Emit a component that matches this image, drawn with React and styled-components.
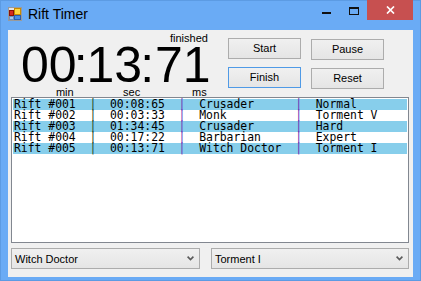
import React from "react";
import styled, { createGlobalStyle } from "styled-components";

const GlobalStyle = createGlobalStyle`
  html, body { margin: 0; padding: 0; }
  body {
    width: 421px; height: 281px; overflow: hidden;
    font-family: "Liberation Sans", Arial, sans-serif;
  }
`;

const Window = styled.div`
  width: 421px; height: 281px; box-sizing: border-box;
  background: #6aabf5;
  box-shadow: inset 0 0 0 1px #5c9be3;
  display: flex; flex-direction: column;
`;

const TitleBar = styled.div`
  height: 30px; flex-shrink: 0;
  display: flex; align-items: flex-start;
`;

const AppIcon = styled.svg`
  margin: 7px 0 0 8px; flex-shrink: 0;
`;

const Title = styled.div`
  margin: 6px 0 0 6px;
  font-size: 14px; line-height: 17px; color: #000;
`;

const Caption = styled.div`
  margin-left: auto; margin-right: 8px;
  display: flex;
`;

const CaptionButton = styled.div`
  width: ${(p) => p.$w}px; height: 20px; box-sizing: border-box;
  padding-top: ${(p) => p.$top}px;
  display: flex; justify-content: center; align-items: flex-start;
  background: ${(p) => p.$bg || "transparent"};
`;

const MinGlyph = styled.div`
  width: 9px; height: 2px; background: #111;
`;

const MaxGlyph = styled.div`
  width: 10px; height: 8px; box-sizing: border-box;
  border: 1px solid #111; border-top-width: 2px;
`;

const Client = styled.div`
  margin: 0 8px 4px 8px; flex: 1;
  background: #f0f0f0;
  display: flex; flex-direction: column;
`;

const TopSection = styled.div`
  height: 67px; flex-shrink: 0;
  display: flex;
`;

const TimeBlock = styled.div`
  width: 207px; margin-left: 13px; padding-top: 3px; box-sizing: border-box;
  display: flex; flex-direction: column;
`;

const Finished = styled.div`
  margin-left: 149px; height: 10px; margin-bottom: 1px;
  font-size: 11px; line-height: 10px; color: #000;
`;

const TimeRow = styled.div`
  display: flex; align-items: flex-start;
`;

const TimeGroup = styled.div`
  display: flex; flex-direction: column; align-items: flex-end;
`;

const Digits = styled.div`
  font-size: 50px; line-height: 43px; height: 43px; color: #000;
`;

const Colon = styled(Digits)`
  margin: ${(p) => p.$m};
`;

const Unit = styled.div`
  font-size: 11px; line-height: 10px; height: 10px;
  margin-right: ${(p) => p.$shift}px;
  color: #000;
`;

const ButtonGrid = styled.div`
  margin-top: 8px;
  display: grid;
  grid-template-columns: 73px 73px;
  grid-auto-rows: 21px;
  column-gap: 10px; row-gap: 8px;
  align-self: flex-start;
`;

const Button = styled.button`
  box-sizing: border-box; height: 21px; padding: 0;
  margin-top: ${(p) => (p.$drop ? 1 : 0)}px;
  border: 1px solid ${(p) => (p.$focused ? "#4f9ae6" : "#acacac")};
  background: linear-gradient(#f0f0f0, #e5e5e5);
  font-family: "Liberation Sans", Arial, sans-serif;
  font-size: 11px; line-height: 19px; color: #000;
`;

const List = styled.div`
  margin: 0 4px 0 3px; height: 146px; flex-shrink: 0;
  box-sizing: border-box;
  border: 1px solid #828790;
  background: #fff;
  padding: 1px;
`;

const Row = styled.div`
  height: 11px; line-height: 11px;
  padding-left: 1px;
  background: ${(p) => (p.$alt ? "#87ceeb" : "transparent")};
  font-family: "DejaVu Sans Mono", "Liberation Mono", monospace;
  font-size: 11.4px;
  white-space: pre; color: #000;
`;

const Pipe = styled.span`
  color: ${(p) => p.$c};
`;

const ComboRow = styled.div`
  display: flex; gap: 11px;
  margin: 5px 4px 0 3px;
`;

const Combo = styled.div`
  box-sizing: border-box;
  width: ${(p) => p.$w}px; height: 21px;
  border: 1px solid #acacac;
  background: linear-gradient(#f0f0f0, #e5e5e5);
  display: flex; align-items: center;
  padding: 0 5px 0 3px;
  font-size: 11px; color: #000;
`;

const Chevron = styled.svg`
  margin-left: auto; flex-shrink: 0;
`;

const rows = [
  ["Rift #001", "00:08:65", "Crusader", "Normal"],
  ["Rift #002", "00:03:33", "Monk", "Torment V"],
  ["Rift #003", "01:34:45", "Crusader", "Hard"],
  ["Rift #004", "00:17:22", "Barbarian", "Expert"],
  ["Rift #005", "00:13:71", "Witch Doctor", "Torment I"],
];

const ChevronIcon = () => (
  <Chevron width="7" height="5" viewBox="0 0 7 5">
    <path d="M0.6 0.6 L3.5 3.6 L6.4 0.6" fill="none" stroke="#5a5a5a" strokeWidth="1.6" />
  </Chevron>
);

export default function App() {
  return (
    <>
      <GlobalStyle />
      <Window>
        <TitleBar>
          <AppIcon width="14" height="14" viewBox="0 0 14 14">
            <rect x="0.5" y="0.5" width="13" height="13" fill="#e4e4e4" stroke="#9a9a9a" />
            <rect x="1.5" y="3.5" width="4" height="5" fill="#d42a1e" stroke="#8a1208" />
            <rect x="6.5" y="1.5" width="6" height="6" fill="#ffd640" stroke="#c98a00" />
            <rect x="6.5" y="8.5" width="6" height="4" fill="#4a8de4" stroke="#2a5fae" />
            <rect x="1.5" y="9.5" width="4" height="3" fill="#a9c6ec" stroke="#6f8fbd" />
          </AppIcon>
          <Title>Rift Timer</Title>
          <Caption>
            <CaptionButton $w={27} $top={12}>
              <MinGlyph />
            </CaptionButton>
            <CaptionButton $w={27} $top={7}>
              <MaxGlyph />
            </CaptionButton>
            <CaptionButton $w={46} $top={6} $bg="#c75050">
              <svg width="9" height="8" viewBox="0 0 9 8">
                <path d="M1 0.5 L8 7.5 M8 0.5 L1 7.5" stroke="#fff" strokeWidth="1.7" />
              </svg>
            </CaptionButton>
          </Caption>
        </TitleBar>
        <Client>
          <TopSection>
            <TimeBlock>
              <Finished>finished</Finished>
              <TimeRow>
                <TimeGroup>
                  <Digits>00</Digits>
                  <Unit $shift={3}>min</Unit>
                </TimeGroup>
                <Colon $m="0 -1px 0 -3px">:</Colon>
                <TimeGroup>
                  <Digits>13</Digits>
                  <Unit $shift={2}>sec</Unit>
                </TimeGroup>
                <Colon $m="0 1px 0 -2px">:</Colon>
                <TimeGroup>
                  <Digits>71</Digits>
                  <Unit $shift={4}>ms</Unit>
                </TimeGroup>
              </TimeRow>
            </TimeBlock>
            <ButtonGrid>
              <Button>Start</Button>
              <Button $drop>Pause</Button>
              <Button $focused>Finish</Button>
              <Button $drop>Reset</Button>
            </ButtonGrid>
          </TopSection>
          <List>
            {rows.map((r, i) => (
              <Row key={r[0]} $alt={i % 2 === 0}>
                {r[0] + "  "}
                <Pipe $c="#1f4f1f">|</Pipe>
                {"  " + r[1] + "  "}
                <Pipe $c="#6b35b5">|</Pipe>
                {"  " + r[2].padEnd(14, " ")}
                <Pipe $c="#6b35b5">|</Pipe>
                {"  " + r[3]}
              </Row>
            ))}
          </List>
          <ComboRow>
            <Combo $w={189}>
              Witch Doctor
              <ChevronIcon />
            </Combo>
            <Combo $w={198}>
              Torment I
              <ChevronIcon />
            </Combo>
          </ComboRow>
        </Client>
      </Window>
    </>
  );
}
